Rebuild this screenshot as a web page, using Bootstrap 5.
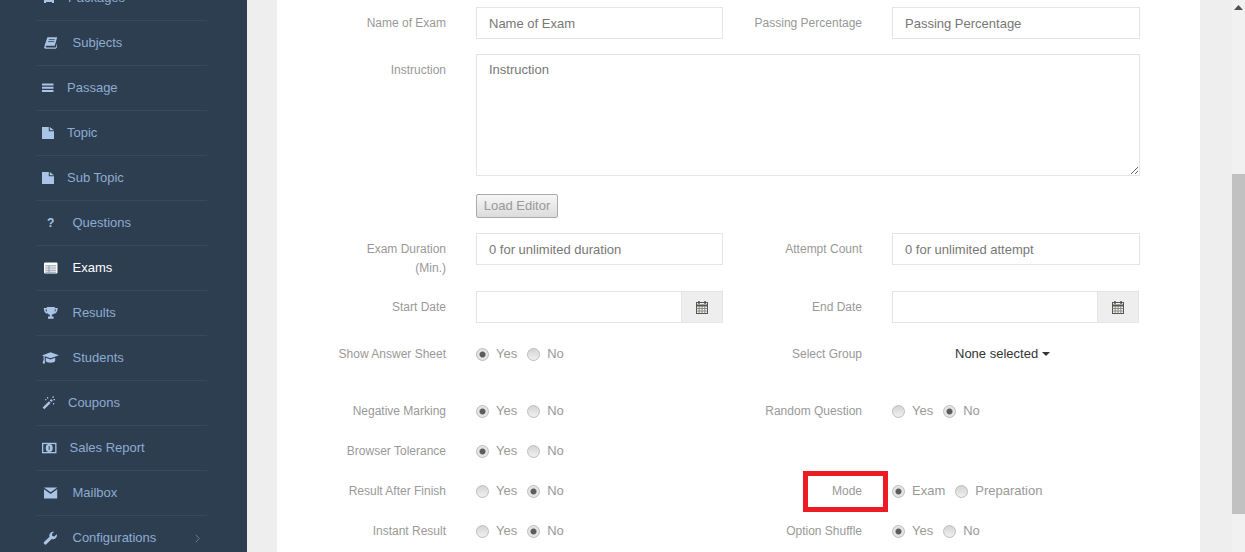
<!DOCTYPE html>
<html lang="en">
<head>
<meta charset="utf-8">
<title>Exams</title>
<link rel="stylesheet" href="https://cdn.jsdelivr.net/npm/bootstrap@5.3.0/dist/css/bootstrap.min.css">
<style>
html,body{height:552px;overflow:hidden}
body{font-family:"Liberation Sans",Arial,sans-serif;font-size:13px;background:#eee}
.shell{height:552px}
.side{width:247px;background:#2d3e50;flex:none;overflow:hidden}
.menu{margin:-24px 0 0 37px;padding:0;width:170px;list-style:none}
.menu-row{height:45px;border-bottom:1px solid #36495e;padding-left:5px;color:#8eacd0;font-size:13px;text-decoration:none}
.menu-row:hover{color:#8eacd0}
.menu-row.on{color:#fff}
.ico{flex:none;height:14px;display:block;fill:#a9c4e4}
.on .ico{fill:#fff}
.s25{width:25px}.s26{width:26px}.s27{width:27.5px}.s30{width:30.5px}
.q{width:30.5px;flex:none;padding-left:5px;font-weight:700;font-size:12px;color:#a9c4e4}
.chev{margin-left:auto;margin-right:7px;width:5px;height:9px;fill:none;stroke:#5f7d9e;stroke-width:1}
.mainarea{flex:1 1 auto;padding-left:30px;padding-right:32px;min-width:0}
.sheet{background:#fff;height:552px;overflow:hidden;padding-top:7px}
.formwrap{width:832px}
.half{display:flex}
.fld-label{width:169px;flex:none;margin:0 30px 0 0;padding:7px 0 0 59px;text-align:right;font-size:12px;line-height:18.6px;color:#999}
.radio-row .fld-label{padding-top:1px;line-height:20px}
.ctl{width:247px;flex:none}
.ctl-w{width:248px;flex:none}
.form-control.fi{height:32px;min-height:32px;border:1px solid #e5e5e5;border-radius:0;padding:6px 12px;font-size:13px;line-height:19px;color:#777;background:#fff}
.form-control.fi::placeholder{color:#777;opacity:1}
textarea.form-control.ta{width:664px;flex:none;height:122px;min-height:122px;padding-top:5px}
.input-group-text.addon{width:42px;height:32px;padding:0;justify-content:center;background:#eee;border:1px solid #e5e5e5;border-radius:0}
.h32{height:32px}
.gap15{margin-bottom:15px}.gap18{margin-bottom:18px}.gap26{margin-bottom:26px}.gap20{margin-bottom:20px}.gap37{margin-bottom:37px}
.loadbtn{display:block;width:82px;height:24px;padding:0;font-size:13px;line-height:22px;color:#999;background:linear-gradient(#f6f6f6,#dcdcdc);border:1px solid #aaa;border-radius:2px}
.loadbtn:hover{color:#999;border-color:#aaa;background:linear-gradient(#f6f6f6,#dcdcdc)}
.loadrow{padding-left:199px}
.radio-row{height:20px}
.opts{padding-top:1px}
.opt{display:inline-flex;align-items:center;gap:7.5px;margin:0 10px 0 0;color:#999;font-size:13px;line-height:20px;height:20px}
.form-check-input.rd[type=radio]{width:13px;height:13px;margin:0 0 0 -.5px;flex:none;border:1px solid #bdbdbd;background-image:linear-gradient(#d4d4d4,#f0f0f0);background-color:#eee;box-shadow:none}
.form-check-input.rd[type=radio]:checked{border-color:#bdbdbd;background-color:#eee;background-image:radial-gradient(circle at center,#5c5c5c 0,#5c5c5c 2.5px,#e4e4e4 3.5px)}
.pick{padding:1px 0 0 63px;color:#333;font-size:13px;line-height:20px}
.caret-mark{display:inline-block;width:8px;height:4px;vertical-align:2px;fill:#333}
.mark-wrap{position:relative}
.redbox{position:absolute;left:110px;top:-9px;width:85px;height:41px;border:5px solid #ed1c24;pointer-events:none}
.sbar{width:13px;flex:none;background:#f1f1f1;display:flex;flex-direction:column}
.sbar-arrow{width:9px;height:5px;margin:5px 0 0 2px;fill:#505050}
.sbar-thumb{margin-top:164px;height:340px;background:#c1c1c1}
</style>
</head>
<body>
<div class="shell d-flex">
  <nav class="side">
    <ul class="menu">
      <li><a href="#" class="menu-row d-flex align-items-center"><svg class="ico s26" viewBox="0 0 26 14"><path d="M3 1h8l1 7H2zM2 9h10v3H10v-1H4v1H2z"/></svg>Packages</a></li>
      <li><a href="#" class="menu-row d-flex align-items-center"><svg class="ico s30" viewBox="0 0 30.5 14"><path d="M5.400 1.200h9.800l-2.500 8.600H4.800c-.9 0-1.200.4-1.200.8s.4.8 1.100.8h9l1.200-4v4.200l-1.200 1.200H3.900c-1.300 0-2-1-1.600-2.300z"/><path d="M6.800 3.600h6M6.200 5.600h6" stroke="#2d3e50" stroke-width=".8" fill="none"/></svg>Subjects</a></li>
      <li><a href="#" class="menu-row d-flex align-items-center"><svg class="ico s25" viewBox="0 0 25 14"><path d="M0 2.500h11.500v2H0zM0 5.800h11.500v2H0zM0 9.100h11.500v2H0z"/></svg>Passage</a></li>
      <li><a href="#" class="menu-row d-flex align-items-center"><svg class="ico s25" viewBox="0 0 25 14"><path d="M0 1h6.800v4.200H12V13H0zM7.800 1 12 4.200H7.800z"/></svg>Topic</a></li>
      <li><a href="#" class="menu-row d-flex align-items-center"><svg class="ico s25" viewBox="0 0 25 14"><path d="M0 1h6.800v4.200H12V13H0zM7.800 1 12 4.200H7.800z"/></svg>Sub Topic</a></li>
      <li><a href="#" class="menu-row d-flex align-items-center"><span class="q">?</span>Questions</a></li>
      <li><a href="#" class="menu-row on d-flex align-items-center"><svg class="ico s30" viewBox="0 0 30.500 14"><path d="M3 1.500h11.500a1 1 0 0 1 1 1v9a1 1 0 0 1-1 1H3a1 1 0 0 1-1-1v-9a1 1 0 0 1 1-1z"/><path d="M3.200 4.800h11M3.200 7h11M3.200 9.200h11M3.200 11.200h11M7 4.500v7" stroke="#8a99aa" stroke-width="1" fill="none"/></svg>Exams</a></li>
      <li><a href="#" class="menu-row d-flex align-items-center"><svg class="ico s30" viewBox="0 0 30.500 14"><path d="M4.800 1h8v4.200c0 2-1.700 3.200-3 3.600v1.700h1.800v2.200H6v-2.200h1.800V8.800c-1.300-.4-3-1.600-3-3.600z"/><path d="M5 2.800H2.600c0 2.300 1 3.800 3 4.300M12.500 2.800h2.400c0 2.300-1 3.800-3 4.300" fill="none" stroke="#a9c4e4" stroke-width="1.500"/></svg>Results</a></li>
      <li><a href="#" class="menu-row d-flex align-items-center"><svg class="ico s30" viewBox="0 0 30.500 14"><path d="M8.500 1.200 17 4.200 8.500 7.200 2.700 5.300V9.500H1.600V5L0 4.400z"/><path d="M3.800 6.800 8.500 8.500 13.200 6.800v3c0 1-2.400 2-4.700 2S3.800 10.800 3.800 9.800zM1 9.500h2.200l-.3 3H.8z"/></svg>Students</a></li>
      <li><a href="#" class="menu-row d-flex align-items-center"><svg class="ico s26" viewBox="0 0 26 14"><path d="M2.300 13.300 .6 11.600 7 5.200 8.700 6.900zM7.800 4.400 9.100 3.100 10.800 4.800 9.500 6.100zM5 1h1.200v1.500H5zM10.500 .3h1.200v1.700h-1.200zM11 7h1.200v1.500H11zM3.200 3h1.200v1.200H3.200zM11.500 3h1.500v1.200h-1.500z"/></svg>Coupons</a></li>
      <li><a href="#" class="menu-row d-flex align-items-center"><svg class="ico s27" viewBox="0 0 27.500 14"><path d="M0 1.800h14.500v10.500H0z"/><path d="M1.300 3.100h11.900v7.900H1.300z" fill="#2d3e50"/><ellipse cx="7.200" cy="7" rx="3.500" ry="3.900"/><path d="M7.200 5v4" stroke="#2d3e50" stroke-width="1"/></svg>Sales Report</a></li>
      <li><a href="#" class="menu-row d-flex align-items-center"><svg class="ico s30" viewBox="0 0 30.500 14"><path d="M2 1.500h13.200L8.600 6.300z"/><path d="M2 3.300 8.600 8l6.600-4.700v9.300H2z"/></svg>Mailbox</a></li>
      <li><a href="#" class="menu-row d-flex align-items-center"><svg class="ico s30" viewBox="0 0 30.500 14"><path d="M15 4.200a3.900 3.900 0 0 1-5.300 3.700l-5.100 5.200a1.600 1.600 0 0 1-2.300-2.300l5.200-5.100A3.900 3.900 0 0 1 12.200 .8L9.800 3.100l.6 1.900 1.900.5 2.400-2.300c.2.300.3.700.3 1z"/></svg>Configurations<svg class="chev" viewBox="0 0 5 9"><path d="M.8 .8 4.200 4.500 .8 8.200"/></svg></a></li>
    </ul>
  </nav>
  <main class="mainarea">
    <div class="sheet">
      <form class="formwrap">
        <div class="row g-0 h32 gap15">
          <div class="col-6 half"><label class="fld-label">Name of Exam</label><div class="ctl"><input class="form-control fi" placeholder="Name of Exam"></div></div>
          <div class="col-6 half"><label class="fld-label">Passing Percentage</label><div class="ctl-w"><input class="form-control fi" placeholder="Passing Percentage"></div></div>
        </div>
        <div class="half gap18">
          <label class="fld-label">Instruction</label>
          <textarea class="form-control fi ta" placeholder="Instruction"></textarea>
        </div>
        <div class="loadrow gap15"><button type="button" class="btn loadbtn">Load Editor</button></div>
        <div class="row g-0 h32 gap26">
          <div class="col-6 half"><label class="fld-label">Exam Duration (Min.)</label><div class="ctl"><input class="form-control fi" placeholder="0 for unlimited duration"></div></div>
          <div class="col-6 half"><label class="fld-label">Attempt Count</label><div class="ctl-w"><input class="form-control fi" placeholder="0 for unlimited attempt"></div></div>
        </div>
        <div class="row g-0 h32 gap20">
          <div class="col-6 half"><label class="fld-label">Start Date</label><div class="ctl input-group flex-nowrap"><input class="form-control fi"><span class="input-group-text addon"><svg width="12" height="13" viewBox="0 0 12 13"><rect x=".5" y="1.500" width="11" height="11" fill="#f3f0ea" stroke="#555"/><path d="M.5 4.500h11" stroke="#555" stroke-width="2"/><path d="M3 0v3M9 0v3" stroke="#555" stroke-width="1.500"/><path d="M.5 7.500h11M.5 10h11M3.200 5v7M6 5v7M8.800 5v7" stroke="#777" stroke-width=".8"/></svg></span></div></div>
          <div class="col-6 half"><label class="fld-label">End Date</label><div class="ctl input-group flex-nowrap"><input class="form-control fi"><span class="input-group-text addon"><svg width="12" height="13" viewBox="0 0 12 13"><rect x=".5" y="1.500" width="11" height="11" fill="#f3f0ea" stroke="#555"/><path d="M.5 4.500h11" stroke="#555" stroke-width="2"/><path d="M3 0v3M9 0v3" stroke="#555" stroke-width="1.500"/><path d="M.5 7.500h11M.5 10h11M3.200 5v7M6 5v7M8.800 5v7" stroke="#777" stroke-width=".8"/></svg></span></div></div>
        </div>
        <div class="row g-0 radio-row gap37">
          <div class="col-6 half"><label class="fld-label">Show Answer Sheet</label><div class="opts"><label class="opt"><input type="radio" class="form-check-input rd" name="a" checked>Yes</label><label class="opt"><input type="radio" class="form-check-input rd" name="a">No</label></div></div>
          <div class="col-6 half"><label class="fld-label">Select Group</label><div class="pick">None selected <svg class="caret-mark" viewBox="0 0 8 4"><path d="M0 0h8L4 4z"/></svg></div></div>
        </div>
        <div class="row g-0 radio-row gap20">
          <div class="col-6 half"><label class="fld-label">Negative Marking</label><div class="opts"><label class="opt"><input type="radio" class="form-check-input rd" name="b" checked>Yes</label><label class="opt"><input type="radio" class="form-check-input rd" name="b">No</label></div></div>
          <div class="col-6 half"><label class="fld-label">Random Question</label><div class="opts"><label class="opt"><input type="radio" class="form-check-input rd" name="c">Yes</label><label class="opt"><input type="radio" class="form-check-input rd" name="c" checked>No</label></div></div>
        </div>
        <div class="row g-0 radio-row gap20">
          <div class="col-6 half"><label class="fld-label">Browser Tolerance</label><div class="opts"><label class="opt"><input type="radio" class="form-check-input rd" name="d" checked>Yes</label><label class="opt"><input type="radio" class="form-check-input rd" name="d">No</label></div></div>
          <div class="col-6"></div>
        </div>
        <div class="row g-0 radio-row gap20">
          <div class="col-6 half"><label class="fld-label">Result After Finish</label><div class="opts"><label class="opt"><input type="radio" class="form-check-input rd" name="e">Yes</label><label class="opt"><input type="radio" class="form-check-input rd" name="e" checked>No</label></div></div>
          <div class="col-6 half mark-wrap"><label class="fld-label">Mode</label><div class="opts"><label class="opt"><input type="radio" class="form-check-input rd" name="f" checked>Exam</label><label class="opt"><input type="radio" class="form-check-input rd" name="f">Preparation</label></div><span class="redbox"></span></div>
        </div>
        <div class="row g-0 radio-row">
          <div class="col-6 half"><label class="fld-label">Instant Result</label><div class="opts"><label class="opt"><input type="radio" class="form-check-input rd" name="g">Yes</label><label class="opt"><input type="radio" class="form-check-input rd" name="g" checked>No</label></div></div>
          <div class="col-6 half"><label class="fld-label">Option Shuffle</label><div class="opts"><label class="opt"><input type="radio" class="form-check-input rd" name="h" checked>Yes</label><label class="opt"><input type="radio" class="form-check-input rd" name="h">No</label></div></div>
        </div>
      </form>
    </div>
  </main>
  <div class="sbar"><svg class="sbar-arrow" viewBox="0 0 9 5"><path d="M0 5 4.500 0 9 5z"/></svg><div class="sbar-thumb"></div></div>
</div>
<script src="https://cdn.jsdelivr.net/npm/bootstrap@5.3.0/dist/js/bootstrap.bundle.min.js"></script>
</body>
</html>
